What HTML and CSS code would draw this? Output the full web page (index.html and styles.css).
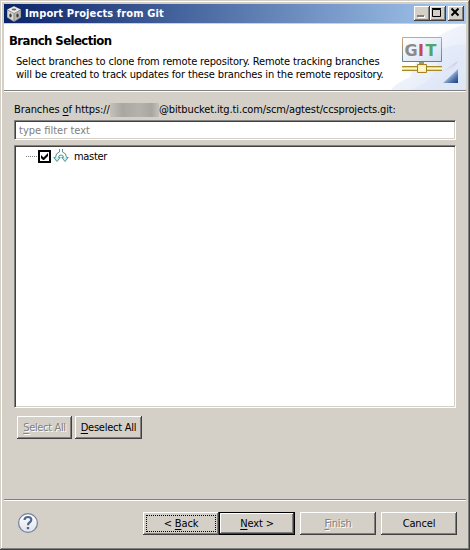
FILE: index.html
```html
<!DOCTYPE html>
<html lang="en">
<head>
<meta charset="utf-8">
<title>Import Projects from Git</title>
<link rel="stylesheet" href="styles.css">
</head>
<body>
<div class="window">
  <div class="titlebar">
    <svg class="app-icon" width="16" height="16" viewBox="0 0 16 16">
      <path d="M8 0L15 3.500V11.500L8 16L1 11.500V3.500Z" fill="#888"/>
      <path d="M8 .5L14.500 3.500L8 7L1.500 3.500Z" fill="#eee"/>
      <path d="M1.500 4.500L7.500 7.500V15L1.500 11Z" fill="#d8d8d4"/>
      <path d="M14.500 4.500L8.500 7.500V15L14.500 11Z" fill="#b5b5b2"/>
      <ellipse cx="8" cy="3.500" rx="2.400" ry="1.100" fill="#666"/>
      <ellipse cx="4.500" cy="9.500" rx="1.200" ry="1.900" fill="#444"/>
      <ellipse cx="11.500" cy="9.500" rx="1.200" ry="1.900" fill="#444"/>
    </svg>
    <span class="title">Import Projects from Git</span>
    <div class="controls">
      <span class="control"><svg width="14" height="12"><path d="M3 9h7v2H3z" fill="#fff"/><path d="M2 8h7v2H2z" fill="#808080"/></svg></span>
      <span class="control"><svg width="14" height="12"><path d="M1.500 2.500h8v7h-8z M1 1.500h9" fill="none" stroke="#000"/></svg></span>
      <span class="control close"><svg width="14" height="12"><path d="M2.500 1.500L9.500 8.500M9.500 1.500L2.500 8.500" stroke="#000" stroke-width="2"/></svg></span>
    </div>
  </div>
  <header class="banner">
    <div class="banner-text">
      <h1>Branch Selection</h1>
      <p><span class="line1">Select branches to clone from remote repository. Remote tracking branches</span><br><span class="line2">will be created to track updates for these branches in the remote repository.</span></p>
    </div>
    <svg class="banner-art" width="75" height="66" viewBox="391 24 75 66">
      <defs>
        <linearGradient id="sky" x1="0" y1="0" x2="1" y2="1"><stop offset="0" stop-color="#fff"/><stop offset="1" stop-color="#dde6f6"/></linearGradient>
        <linearGradient id="panel" x1="0" y1="0" x2="1" y2="1"><stop offset="0" stop-color="#fff"/><stop offset="1" stop-color="#d3dff0"/></linearGradient>
        <linearGradient id="edge" x1="0" y1="0" x2="0" y2="1"><stop offset="0" stop-color="#dba36b"/><stop offset="1" stop-color="#5c8494"/></linearGradient>
        <linearGradient id="fold" x1="0" y1="0" x2="1" y2="1"><stop offset=".4" stop-color="#b9cbe6"/><stop offset=".7" stop-color="#5277b0"/><stop offset="1" stop-color="#1c3d7d"/></linearGradient>
        <linearGradient id="shade" x1="0" y1="0" x2="0" y2="1"><stop offset="0" stop-color="#b9b5d2" stop-opacity=".7"/><stop offset="1" stop-color="#fff" stop-opacity="0"/></linearGradient>
      </defs>
      <path d="M391 90Q394 84 410 77Q423 35 466 24V90Z" fill="url(#sky)"/>
      <path d="M440 50Q452 44 466 45V90H410Q440 80 440 50Z" fill="#dce6f7" opacity=".55"/>
      <path d="M402 71H442L458 61Q452 74 430 78Q410 80 402 74Z" fill="url(#shade)"/>
      <path d="M402.500 37.500H441.500V61.500H402.500Z" fill="url(#panel)" stroke="url(#edge)"/>
      <text class="git" y="56"><tspan x="404.500" fill="#8b8b8b">G</tspan><tspan x="418" fill="#c04b50">I</tspan><tspan x="425.500" fill="#4fa666">T</tspan></text>
      <path d="M402 66.500h40M402 70.500h40" stroke="#a48b2a"/>
      <path d="M402 67h40v3h-40z" fill="#e9d978"/>
      <path d="M402 68.500h40" stroke="#fff6c2"/>
      <path d="M419 63.500h5" stroke="#8c9c78" stroke-width="3"/>
      <path d="M417.500 64.500h9v8h-9z" fill="#fff1ad" stroke="#a58024"/>
      <path d="M419.500 66.500h5v4h-5z" fill="#fff8d9"/>
      <path d="M458 69V83H443Z" fill="url(#fold)"/>
    </svg>
  </header>
  <main class="content">
    <div class="label"><span class="label-a">Branches <u>o</u>f https://</span><span class="redacted"></span><span class="label-b">@bitbucket.itg.ti.com/scm/agtest/ccsprojects.git:</span></div>
    <div class="field"><span class="placeholder">type filter text</span></div>
    <div class="tree">
      <div class="row">
        <span class="dots"></span>
        <svg class="check" width="13" height="13"><path d="M1 1h11v11H1z" fill="#fff" stroke="#000" stroke-width="2"/><path d="M3 5v3l2 2h1l4-4V3L5.500 7.500Z" fill="#000"/></svg>
        <svg class="branch" width="16" height="16" viewBox="0 0 16 16"><path d="M6.500 1v3Q2.500 5 2.500 9.500M9.500 1v3Q13.500 5 13.500 9.500M5.500 9.500Q5.500 7 8 7Q10.500 7 10.500 9.500" fill="none" stroke="#559396"/><path d="M2.500 9.500H.8L4 13.500L7.200 9.500H5.500M10.500 9.500H8.800L12 13.500L15.200 9.500H13.500" fill="#b9f2ef" stroke="#559396"/></svg>
        <span class="name">master</span>
      </div>
    </div>
    <div class="select-actions">
      <span class="button select-all disabled"><span><u>S</u>elect All</span></span>
      <span class="button deselect-all"><span><u>D</u>eselect All</span></span>
    </div>
  </main>
  <footer class="footer">
    <svg class="help" width="22" height="22" viewBox="0 0 22 22"><defs><linearGradient id="hg" x1="0" y1="0" x2="0" y2="1"><stop offset="0" stop-color="#fff"/><stop offset="1" stop-color="#dfe3ea"/></linearGradient></defs><circle cx="11" cy="11" r="9.400" fill="url(#hg)" stroke="#6e7f9d" stroke-width="1.200"/><path d="M7.500 8Q7.700 5 11 5Q14.300 5 14.300 7.800Q14.300 9.300 12.500 10.500Q11 11.500 11 13.300" fill="none" stroke="#506890" stroke-width="2.200"/><path d="M9.800 15h2.400v2.200H9.800z" fill="#506890"/></svg>
    <span class="button nav back"><span>&lt; <u>B</u>ack</span></span>
    <span class="button nav next"><span><u>N</u>ext &gt;</span></span>
    <span class="button nav finish disabled"><span><u>F</u>inish</span></span>
    <span class="button nav cancel"><span>Cancel</span></span>
  </footer>
</div>
</body>
</html>
```
FILE: styles.css
```css
* { box-sizing: border-box; }
body { margin: 0; background: #d4d0c8; }
.window {
  width: 470px; height: 550px; padding: 4px;
  display: flex; flex-direction: column;
  background: #d4d0c8;
  box-shadow: inset -1px -1px #404040, inset 1px 1px #d4d0c8, inset -2px -2px #808080, inset 2px 2px #fff;
  font: 11px/13px "DejaVu Sans Condensed", "DejaVu Sans", sans-serif;
  font-stretch: condensed;
  color: #000; white-space: nowrap;
}
.titlebar {
  height: 19px; flex: none; display: flex; align-items: center;
  padding: 0 2px; background: linear-gradient(90deg, #0a246a, #a6caf0);
}
.app-icon { flex: none; }
.title { margin-left: 3px; color: #fff; font-weight: bold; letter-spacing: 0.12px; }
.controls { margin-left: auto; display: flex; }
.control {
  width: 16px; height: 15px; padding: 1px; background: #d4d0c8;
  box-shadow: inset -1px -1px #404040, inset 1px 1px #fff, inset -2px -2px #808080;
}
.control svg { display: block; }
.close { margin-left: 2px; }
.banner {
  height: 68px; flex: none; display: flex; justify-content: space-between;
  margin-top: 1px; background: #fff; border-bottom: 1px solid #fff;
  box-shadow: inset 0 -1px #808080;
}
.banner-text { padding: 9px 0 0 5px; }
.banner-art { flex: none; }
h1 { margin: 0; font-size: 13px; line-height: 16px; font-weight: bold; letter-spacing: -0.56px; }
p { margin: 6px 0 0 7px; }
.line1 { letter-spacing: -0.165px; }
.line2 { letter-spacing: -0.14px; }
.git { font: bold 16px "DejaVu Sans", sans-serif; }
.content { padding: 11px 10px 0; flex: 1; }
.label { height: 13px; display: flex; }
.label-a { width: 96px; flex: none; letter-spacing: -0.08px; }
.label-b { letter-spacing: -0.12px; }
.redacted {
  width: 49px; height: 14px; flex: none;
  background: linear-gradient(90deg, #c5c1ba, #aaa7a1 25%, #b5b1ab 60%, #a9a6a0 85%, #c5c1ba);
}
.field, .tree {
  background: #fff;
  border: 1px solid; border-color: #808080 #fff #fff #808080;
  box-shadow: inset 1px 1px #404040, inset -1px -1px #d4d0c8;
}
.field { margin-top: 4px; height: 20px; padding: 3px 4px; color: #808080; }
.tree { margin-top: 5px; height: 263px; padding: 2px 0 0 11px; }
.row { display: flex; align-items: center; height: 16px; }
.dots { width: 12px; height: 1px; background: repeating-linear-gradient(90deg, #808080 0 1px, #fff 1px 2px); }
.branch { margin-left: 2px; }
.name { margin-left: 5px; letter-spacing: -0.3px; }
.select-actions { display: flex; gap: 3px; margin: 8px 0 0 3px; }
.button {
  display: flex; align-items: center; justify-content: center;
  height: 23px; padding-bottom: 1px; background: #d4d0c8;
  letter-spacing: -0.15px;
  box-shadow: inset -1px -1px #404040, inset 1px 1px #fff, inset -2px -2px #808080;
}
.select-all { width: 55px; letter-spacing: -0.35px; }
.deselect-all { width: 67px; letter-spacing: -0.25px; }
.disabled { color: #808080; text-shadow: 1px 1px #fff; }
.footer {
  height: 47px; flex: none; display: flex; align-items: flex-start;
  padding: 12px 9px 0 13px; border-top: 1px solid #808080;
  box-shadow: inset 0 1px #fff;
}
.help { margin-right: 104px; }
.nav { width: 76px; padding-bottom: 0; }
.back { position: relative; }
.back::after { content: ""; position: absolute; inset: 3px 3px 3px 3px; border: 1px dotted #000; }
.next { border: 1px solid #000; }
.finish, .cancel { margin-left: 5px; }
u { text-underline-offset: 2px; text-decoration-thickness: 1px; }
```
